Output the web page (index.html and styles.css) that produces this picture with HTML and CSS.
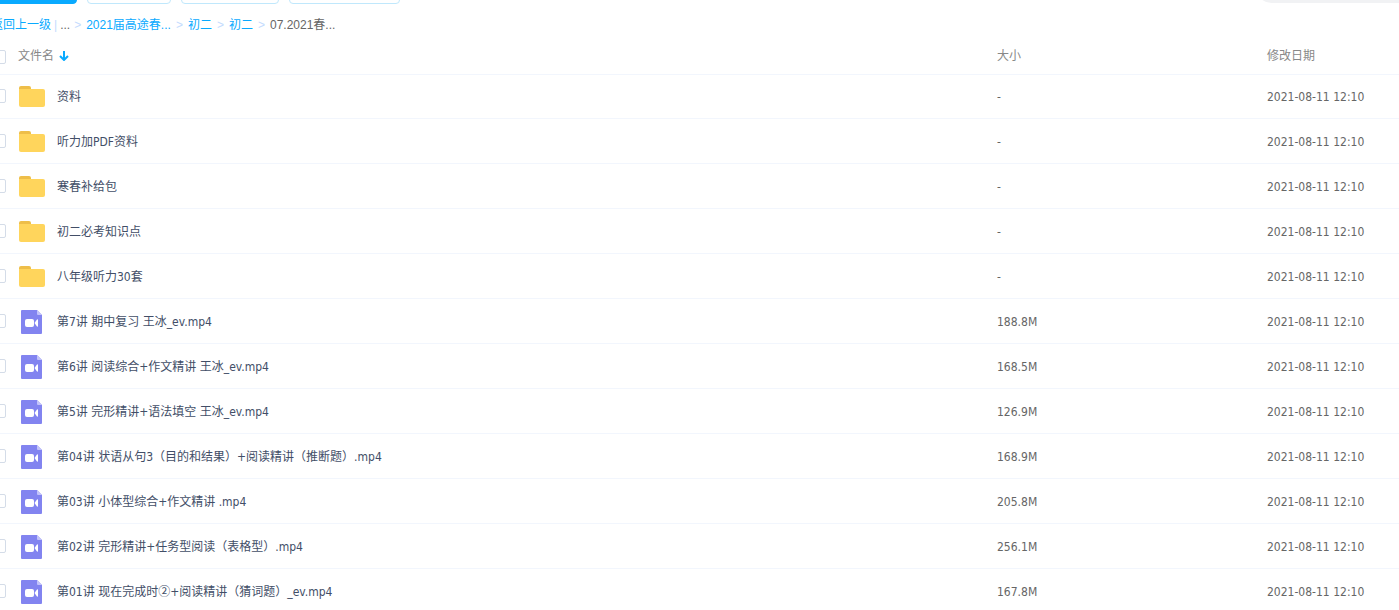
FILE: index.html
```html
<!DOCTYPE html>
<html lang="zh-CN">
<head>
<meta charset="utf-8">
<title>文件列表</title>
<link rel="stylesheet" href="styles.css">
</head>
<body>
<svg class="sprite" aria-hidden="true">
  <symbol id="folder" viewBox="0 0 26 22">
    <path fill="#eebe49" d="M0 5V2Q0 0 2 0H10Q12 0 12 2V5Z"/>
    <path fill="#ffd55c" d="M0 3H24Q26 3 26 5V19Q26 21 24 21H2Q0 21 0 19Z"/>
  </symbol>
  <symbol id="video" viewBox="0 0 26 24">
    <path fill="#8284f0" d="M3 0H18L23 5V23Q23 24 22 24H3Q2 24 2 23V1Q2 0 3 0Z"/>
    <path fill="#c3c4fa" d="M18 0L23 5H19Q18 5 18 4Z"/>
    <rect x="6" y="9" width="9" height="8" rx="2" fill="#fff"/>
    <path fill="#fff" d="M15.500 13L18 9.500Q19 9 19 10V16Q19 17 18 16.500Z"/>
  </symbol>
</svg>
<main class="page">
  <div class="toolbar">
    <button class="btn btn-primary" aria-label="上传"></button>
    <button class="btn btn-new" aria-label="新建"></button>
    <button class="btn btn-share" aria-label="分享"></button>
    <button class="btn btn-offline" aria-label="下载"></button>
    <input class="search" type="text" aria-label="搜索">
  </div>
  <nav class="crumbs">
    <a href="#">返回上一级</a>
    <span class="bar">|</span>
    <span class="more">...</span>
    <span class="sep">&gt;</span>
    <a href="#">2021届高途春...</a>
    <span class="sep">&gt;</span>
    <a href="#">初二</a>
    <span class="sep">&gt;</span>
    <a href="#">初二</a>
    <span class="sep">&gt;</span>
    <span class="current">07.2021春...</span>
  </nav>
  <table class="files">
    <colgroup><col class="col-check"><col><col class="col-size"><col class="col-date"></colgroup>
    <thead>
      <tr>
        <th><input type="checkbox" aria-label="全选"></th>
        <th>文件名<svg class="sort" viewBox="0 0 10 10" aria-hidden="true"><path d="M5 0V9M1 5L5 9L9 5" fill="none" stroke="#09aaff" stroke-width="2"/></svg></th>
        <th>大小</th>
        <th>修改日期</th>
      </tr>
    </thead>
    <tbody>
      <tr><td><input type="checkbox" aria-label="资料"></td><td><div class="name"><svg class="icon"><use href="#folder"/></svg><span>资料</span></div></td><td>-</td><td>2021-08-11 12:10</td></tr>
      <tr><td><input type="checkbox" aria-label="听力加PDF资料"></td><td><div class="name"><svg class="icon"><use href="#folder"/></svg><span>听力加PDF资料</span></div></td><td>-</td><td>2021-08-11 12:10</td></tr>
      <tr><td><input type="checkbox" aria-label="寒春补给包"></td><td><div class="name"><svg class="icon"><use href="#folder"/></svg><span>寒春补给包</span></div></td><td>-</td><td>2021-08-11 12:10</td></tr>
      <tr><td><input type="checkbox" aria-label="初二必考知识点"></td><td><div class="name"><svg class="icon"><use href="#folder"/></svg><span>初二必考知识点</span></div></td><td>-</td><td>2021-08-11 12:10</td></tr>
      <tr><td><input type="checkbox" aria-label="八年级听力30套"></td><td><div class="name"><svg class="icon"><use href="#folder"/></svg><span>八年级听力30套</span></div></td><td>-</td><td>2021-08-11 12:10</td></tr>
      <tr><td><input type="checkbox" aria-label="第7讲"></td><td><div class="name"><svg class="icon video"><use href="#video"/></svg><span>第7讲 期中复习 王冰_ev.mp4</span></div></td><td>188.8M</td><td>2021-08-11 12:10</td></tr>
      <tr><td><input type="checkbox" aria-label="第6讲"></td><td><div class="name"><svg class="icon video"><use href="#video"/></svg><span>第6讲 阅读综合+作文精讲 王冰_ev.mp4</span></div></td><td>168.5M</td><td>2021-08-11 12:10</td></tr>
      <tr><td><input type="checkbox" aria-label="第5讲"></td><td><div class="name"><svg class="icon video"><use href="#video"/></svg><span>第5讲 完形精讲+语法填空 王冰_ev.mp4</span></div></td><td>126.9M</td><td>2021-08-11 12:10</td></tr>
      <tr><td><input type="checkbox" aria-label="第04讲"></td><td><div class="name"><svg class="icon video"><use href="#video"/></svg><span>第04讲 状语从句3（目的和结果）+阅读精讲（推断题）.mp4</span></div></td><td>168.9M</td><td>2021-08-11 12:10</td></tr>
      <tr><td><input type="checkbox" aria-label="第03讲"></td><td><div class="name"><svg class="icon video"><use href="#video"/></svg><span>第03讲 小体型综合+作文精讲 .mp4</span></div></td><td>205.8M</td><td>2021-08-11 12:10</td></tr>
      <tr><td><input type="checkbox" aria-label="第02讲"></td><td><div class="name"><svg class="icon video"><use href="#video"/></svg><span>第02讲 完形精讲+任务型阅读（表格型）.mp4</span></div></td><td>256.1M</td><td>2021-08-11 12:10</td></tr>
      <tr><td><input type="checkbox" aria-label="第01讲"></td><td><div class="name"><svg class="icon video"><use href="#video"/></svg><span>第01讲 现在完成时<span class="cjk">②</span>+阅读精讲（猜词题）_ev.mp4</span></div></td><td>167.8M</td><td>2021-08-11 12:10</td></tr>
    </tbody>
  </table>
</main>
</body>
</html>
```
FILE: styles.css
```css
* { box-sizing: border-box; }
body {
  margin: 0;
  overflow: hidden;
  background: #fff;
  color: #424e67;
  font: 12px/18px "DejaVu Sans Condensed", "Noto Sans CJK SC", sans-serif;
}
.sprite { display: none; }
.page { margin: -28px 0 0 -9px; }

.toolbar { display: flex; gap: 10px; height: 32px; }
.btn {
  height: 32px;
  padding: 0;
  border: 1px solid #c0e8fc;
  border-radius: 4px;
  background: #fff;
}
.btn-primary { width: 86px; border-color: #09aaff; background: #09aaff; }
.btn-new { width: 84px; }
.btn-share { width: 98px; }
.btn-offline { width: 111px; }
.search {
  width: 166px;
  height: 31px;
  margin: 0 -23px 0 auto;
  border: 0;
  border-radius: 16px;
  background: #f1f2f4;
}

.crumbs {
  display: flex;
  gap: 5px;
  padding-top: 8px;
  font-family: "Liberation Sans", "Noto Sans CJK SC", sans-serif;
  line-height: 26px;
  white-space: nowrap;
}
.crumbs a { color: #09aaff; text-decoration: none; }
.bar, .sep { color: #c4dbfe; }
.bar { margin: 0 -2px; }
.more { margin-right: -1px; }
.more, .current { color: #666; }

.files { width: 100%; border-collapse: collapse; table-layout: fixed; }
.col-check { width: 27px; }
.col-size { width: 270px; }
.col-date { width: 132px; }
th, td { padding: 0; text-align: left; white-space: nowrap; }
th { height: 36px; color: #888; font-weight: normal; }
thead tr { box-shadow: 0 1px #f2f6fd; }
tbody tr { height: 45px; box-shadow: inset 0 -1px #f2f6fd; }
td { color: #666; }
input[type="checkbox"] {
  display: block;
  appearance: none;
  width: 15px;
  height: 14px;
  margin: 0 0 2px;
  border: 1px solid #d4dce8;
  border-radius: 2px;
}
th input[type="checkbox"] { margin: 2px 0 0; }
.sort { width: 10px; height: 10px; margin-left: 5px; vertical-align: -1px; }
.name { display: flex; align-items: center; gap: 12px; padding-left: 1px; color: #424e67; }
.icon { width: 26px; height: 22px; }
.icon.video { height: 24px; }
.cjk { font-family: "Noto Sans CJK SC", sans-serif; }
```
